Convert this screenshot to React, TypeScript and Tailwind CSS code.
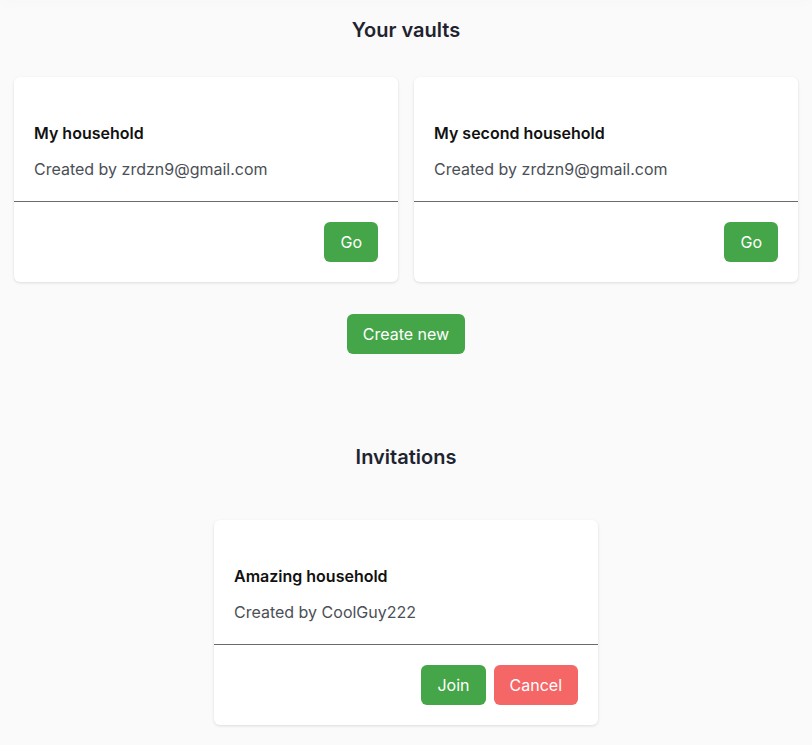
import React from "react";

function Card({ title, by, children }: { title: string; by: string; children: React.ReactNode }) {
  return (
    <div className="w-[384px] rounded-md bg-white shadow-[0_1px_3px_rgba(0,0,0,0.12)]">
      <div className="px-5 pt-[44px] pb-5">
        <div className="text-[16px] leading-6 font-semibold text-[#111111]">{title}</div>
        <div className="mt-3 text-[16px] leading-6 text-[#4b4f56]">Created by {by}</div>
      </div>
      <div className="h-px bg-[#6b6b6b]" />
      <div className="flex justify-end gap-2 p-5">{children}</div>
    </div>
  );
}

function Btn({ label, red }: { label: string; red?: boolean }) {
  return (
    <button
      className={
        "h-10 rounded-md px-4 text-[16px] text-white " + (red ? "bg-[#f56666]" : "bg-[#44a648]")
      }
    >
      {label}
    </button>
  );
}

export default function App() {
  return (
    <div
      className="min-h-[745px] bg-[#fafafa] overflow-hidden"
      style={{ fontFamily: "Inter, 'Noto Sans', sans-serif" }}
    >
      <div className="h-px -mt-px shadow-[0_0_12px_rgba(0,0,0,0.12)]" />
      <h1 className="mt-[16px] text-center text-[20px] leading-7 font-semibold text-[#1f2330]">Your vaults</h1>
      <div className="mt-[33px] flex justify-center gap-4 px-[14px]">
        <Card title="My household" by="zrdzn9@gmail.com">
          <Btn label="Go" />
        </Card>
        <Card title="My second household" by="zrdzn9@gmail.com">
          <Btn label="Go" />
        </Card>
      </div>
      <div className="mt-[32px] flex justify-center">
        <Btn label="Create new" />
      </div>
      <h2 className="mt-[89px] text-center text-[20px] leading-7 font-semibold text-[#1f2330]">Invitations</h2>
      <div className="mt-[49px] flex justify-center">
        <Card title="Amazing household" by="CoolGuy222">
          <Btn label="Join" />
          <Btn label="Cancel" red />
        </Card>
      </div>
    </div>
  );
}
